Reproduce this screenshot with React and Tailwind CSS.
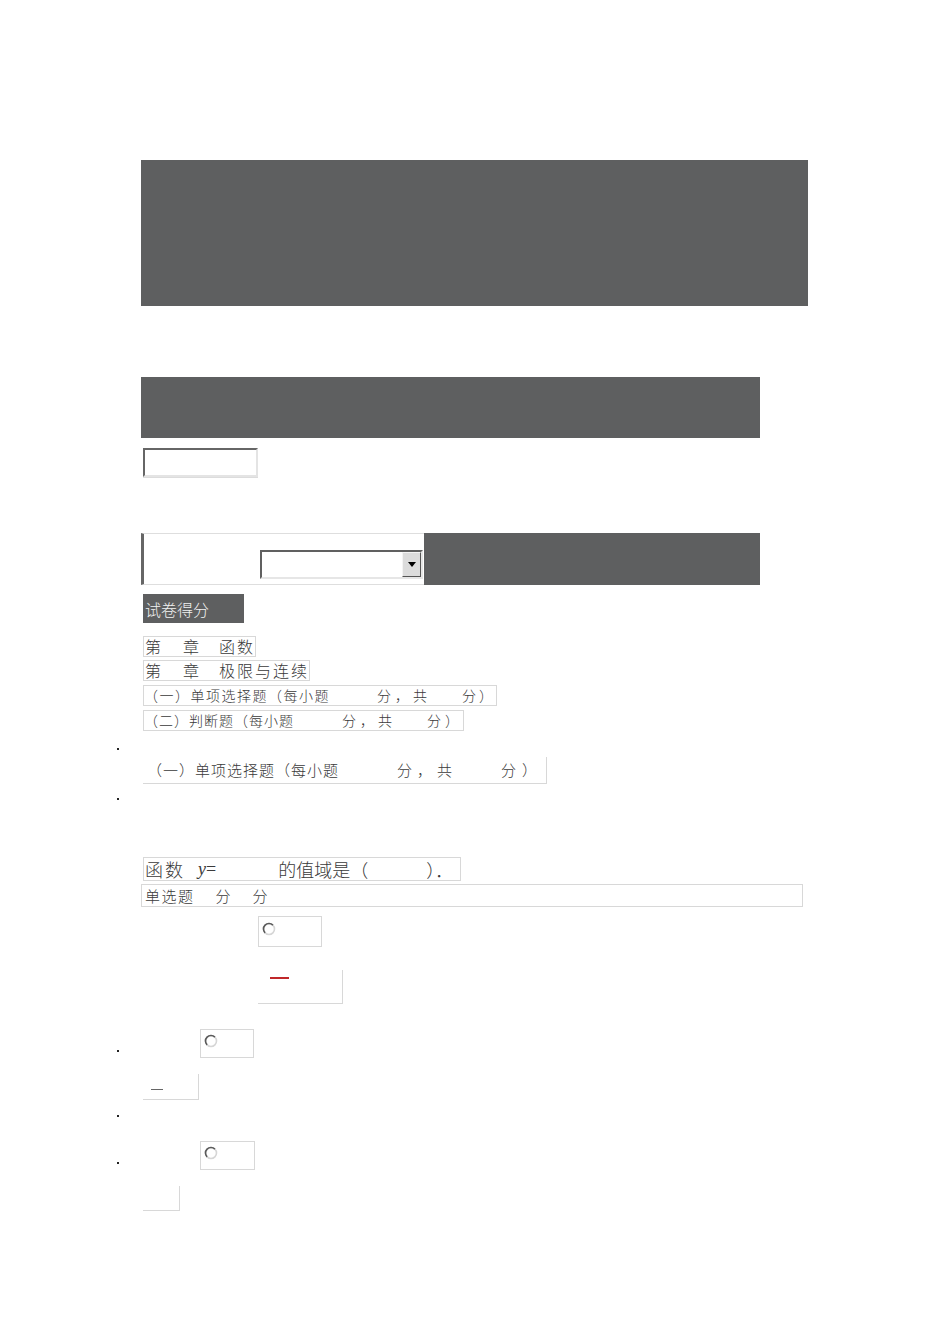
import React from 'react'

const cjk = { fontFamily: '"Noto Sans CJK SC", "Noto Sans", sans-serif' }

function Radio() {
  return (
    <svg width="14" height="14" viewBox="0 0 14 14" className="block">
      <circle cx="7" cy="7" r="5.5" fill="#fff" stroke="#d6d6d6" strokeWidth="1.6" />
      <path d="M10.9 3.1 A5.5 5.5 0 0 0 3.1 10.9" fill="none" stroke="#5a5a5a" strokeWidth="1.6" />
    </svg>
  )
}

function Dot() {
  return <div className="w-[2px] h-[2px] bg-[#222] shrink-0" />
}

export default function App() {
  return (
    <div className="min-h-[1344px] w-[950px] bg-white text-[#3a3a3a] font-light" style={cjk}>
      <div className="flex flex-col items-start pt-[160px]">
        {/* header panels */}
        <div className="ml-[141px] h-[146px] w-[667px] bg-[#5e5f60]" />
        <div className="ml-[141px] mt-[71px] h-[61px] w-[619px] bg-[#5e5f60]" />

        {/* text input */}
        <div className="ml-[143px] mt-[10px] border-b border-[#dcdcdc]">
          <div className="w-[115px] h-[29px] border-2 border-t-[#666] border-l-[#666] border-r-[#e4e4e4] border-b-[#e4e4e4] bg-white" />
        </div>

        {/* select row */}
        <div className="ml-[141px] mt-[55px] flex h-[52px] w-[619px]">
          <div className="w-[283px] h-full border-l-[3px] border-l-[#666] border-t border-b border-t-[#dedede] border-b-[#dedede] pt-[16px] pl-[116px]">
            <div className="w-[163px] h-[29px] border-2 border-t-[#606060] border-l-[#606060] border-r-[#e6e6e6] border-b-[#e6e6e6] bg-white flex justify-end">
              <div className="w-[19px] h-full bg-[#dcdcdc] border border-t-[#f4f4f4] border-l-[#f4f4f4] border-r-[#555] border-b-[#555] flex items-center justify-center">
                <div className="w-0 h-0 border-l-[4px] border-r-[4px] border-t-[5px] border-l-transparent border-r-transparent border-t-black" />
              </div>
            </div>
          </div>
          <div className="flex-1 h-full bg-[#5e5f60]" />
        </div>

        {/* score label */}
        <div className="ml-[143px] mt-[9px] w-[101px] h-[29px] bg-[#5e5f60] text-[#f2f2f2] text-[16px] flex items-center pl-[2px]">
          试卷得分
        </div>

        {/* chapter lines */}
        <div className="ml-[143px] mt-[13px] h-[21px] border border-[#d8d8d8] text-[16px] leading-[19px] flex pl-[1px]">
          <span>第</span>
          <span className="ml-[22px]">章</span>
          <span className="ml-[20px] tracking-[2px]">函数</span>
        </div>
        <div className="ml-[143px] mt-[3px] h-[21px] border border-[#d8d8d8] text-[16px] leading-[19px] flex pl-[1px]">
          <span>第</span>
          <span className="ml-[22px]">章</span>
          <span className="ml-[20px] tracking-[2px]">极限与连续</span>
        </div>
        <div className="ml-[143px] mt-[4px] h-[21px] border border-[#d8d8d8] text-[14px] leading-[19px] flex">
          <span className="tracking-[1.5px]">（一）单项选择题（每小题</span>
          <span className="ml-[47px] tracking-[4px]">分，共</span>
          <span className="ml-[31px] tracking-[3px]">分）</span>
        </div>
        <div className="ml-[143px] mt-[4px] h-[21px] border border-[#d8d8d8] text-[14px] leading-[19px] flex">
          <span className="tracking-[1px]">（二）判断题（每小题</span>
          <span className="ml-[48px] tracking-[4px]">分，共</span>
          <span className="ml-[31px] tracking-[4px]">分）</span>
        </div>

        <div className="ml-[117px] mt-[17px]"><Dot /></div>

        {/* section heading */}
        <div className="ml-[143px] mt-[7px] h-[27px] border-r border-b border-[#d8d8d8] text-[15px] leading-[26px] flex pl-[4px] pr-[3px]">
          <span className="tracking-[1px]">（一）单项选择题（每小题</span>
          <span className="ml-[58px] tracking-[5px]">分，共</span>
          <span className="ml-[44px] tracking-[6px]">分）</span>
        </div>

        <div className="ml-[117px] mt-[14px]"><Dot /></div>

        {/* question */}
        <div className="ml-[143px] mt-[57px] h-[24px] border border-[#d8d8d8] text-[18px] leading-[22px] flex pl-[1px] pr-[7px]">
          <span className="tracking-[2px]">函数</span>
          <span className="ml-[13px] italic" style={{ fontFamily: '"Liberation Serif", serif' }}>y</span>
          <span style={{ fontFamily: '"Liberation Serif", serif' }}>=</span>
          <span className="ml-[62px]">的值域是（</span>
          <span className="ml-[58px]">）．</span>
        </div>
        <div className="ml-[141px] mt-[3px] h-[23px] w-[662px] border border-[#d8d8d8] text-[15px] leading-[21px] flex pl-[3px]">
          <span className="tracking-[1.5px]">单选题</span>
          <span className="ml-[21px]">分</span>
          <span className="ml-[22px]">分</span>
        </div>

        {/* options */}
        <div className="ml-[258px] mt-[9px] w-[64px] h-[31px] border border-[#d8d8d8] pl-[3px] pt-[5px]">
          <Radio />
        </div>
        <div className="ml-[258px] mt-[23px] w-[85px] h-[34px] border-r border-b border-[#d8d8d8] pl-[12px] pt-[7px]">
          <div className="w-[19px] h-[2px] bg-[#c0282a]" />
        </div>

        <div className="ml-[117px] mt-[25px] flex items-end">
          <div className="mb-[6px]"><Dot /></div>
          <div className="ml-[81px] w-[54px] h-[29px] border border-[#d8d8d8] pl-[3px] pt-[4px]">
            <Radio />
          </div>
        </div>
        <div className="ml-[143px] mt-[16px] w-[56px] h-[26px] border-r border-b border-[#d8d8d8] pl-[8px] pt-[15px]">
          <div className="w-[12px] h-[1px] bg-[#666]" />
        </div>

        <div className="ml-[117px] mt-[15px]"><Dot /></div>

        <div className="ml-[117px] mt-[24px] flex items-end">
          <div className="mb-[6px]"><Dot /></div>
          <div className="ml-[81px] w-[55px] h-[29px] border border-[#d8d8d8] pl-[3px] pt-[4px]">
            <Radio />
          </div>
        </div>
        <div className="ml-[143px] mt-[16px] w-[37px] h-[25px] border-r border-b border-[#d8d8d8]" />
      </div>
    </div>
  )
}
